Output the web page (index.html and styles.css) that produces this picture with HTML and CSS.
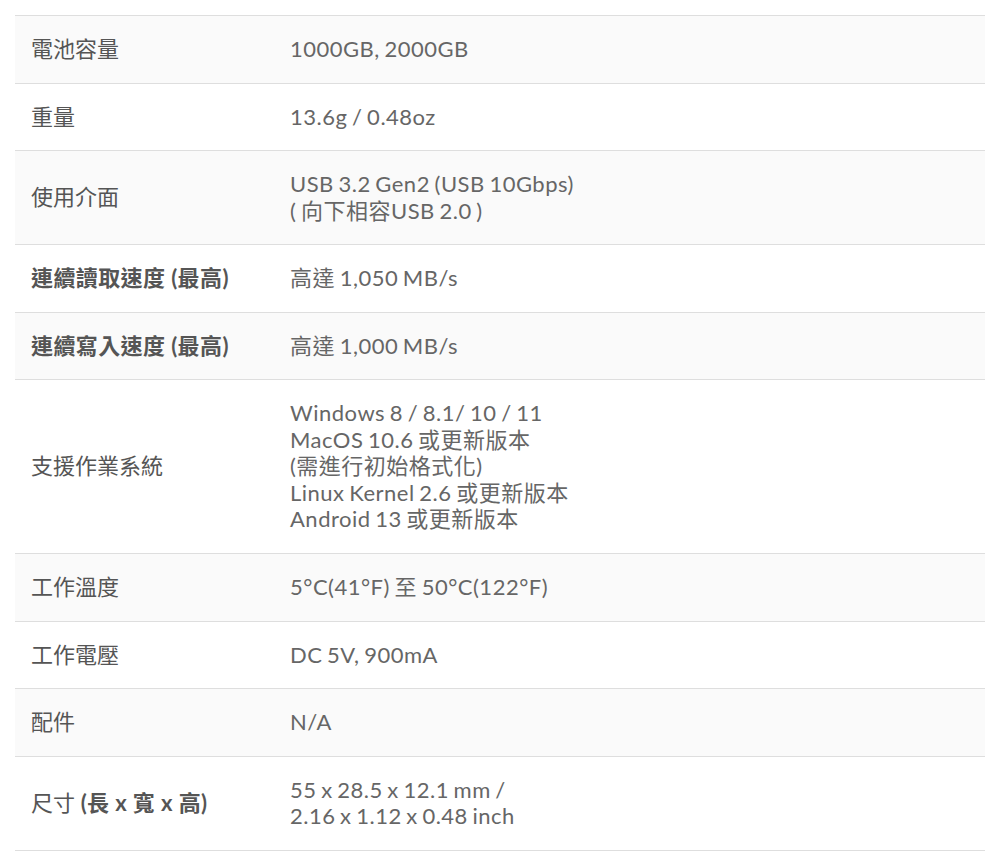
FILE: index.html
```html
<!DOCTYPE html>
<html lang="zh-Hant">
<head>
<meta charset="utf-8">
<title>規格</title>
<link rel="stylesheet" href="styles.css">
</head>
<body>
<div class="wrap">
  <table class="spec">
    <tbody>
      <tr><th>電池容量</th><td>1000GB, 2000GB</td></tr>
      <tr><th>重量</th><td>13.6g / 0.48oz</td></tr>
      <tr><th>使用介面</th><td>USB 3.2 Gen2 (USB 10Gbps)<br>( 向下相容USB 2.0 )</td></tr>
      <tr><th><strong>連續讀取速度 (最高)</strong></th><td>高達 1,050 MB/s</td></tr>
      <tr><th><strong>連續寫入速度 (最高)</strong></th><td>高達 1,000 MB/s</td></tr>
      <tr><th>支援作業系統</th><td>Windows 8 / 8.1/ 10 / 11<br>MacOS 10.6 或更新版本<br>(需進行初始格式化)<br>Linux Kernel 2.6 或更新版本<br>Android 13 或更新版本</td></tr>
      <tr><th>工作溫度</th><td>5°C(41°F) 至 50°C(122°F)</td></tr>
      <tr><th>工作電壓</th><td>DC 5V, 900mA</td></tr>
      <tr><th>配件</th><td>N/A</td></tr>
      <tr><th>尺寸 <strong>(長 x 寬 x 高)</strong></th><td>55 x 28.5 x 12.1 mm /<br>2.16 x 1.12 x 0.48 inch</td></tr>
    </tbody>
  </table>
</div>
</body>
</html>
```
FILE: styles.css
```css
html, body {
  margin: 0;
  padding: 0;
  background: #ffffff;
}
.wrap {
  padding: 15px;
}
.spec {
  width: 100%;
  border-collapse: collapse;
  font-family: "Lato", "Noto Sans CJK TC", sans-serif;
  font-size: 22px;
  line-height: 26.55px;
}
.spec tr {
  border-top: 1px solid #dedede;
  border-bottom: 1px solid #dedede;
}
.spec tr:nth-child(odd) {
  background: #fafafa;
}
.spec th,
.spec td {
  padding: 20px 0 20px 0;
  vertical-align: middle;
  text-align: left;
}
.spec th {
  width: 259px;
  padding-left: 16px;
  font-weight: 400;
  color: #555555;
}
.spec th strong {
  font-weight: 700;
  letter-spacing: 0.4px;
}
.spec td {
  color: #666666;
  letter-spacing: 0.5px;
  word-spacing: -1.5px;
}
```
